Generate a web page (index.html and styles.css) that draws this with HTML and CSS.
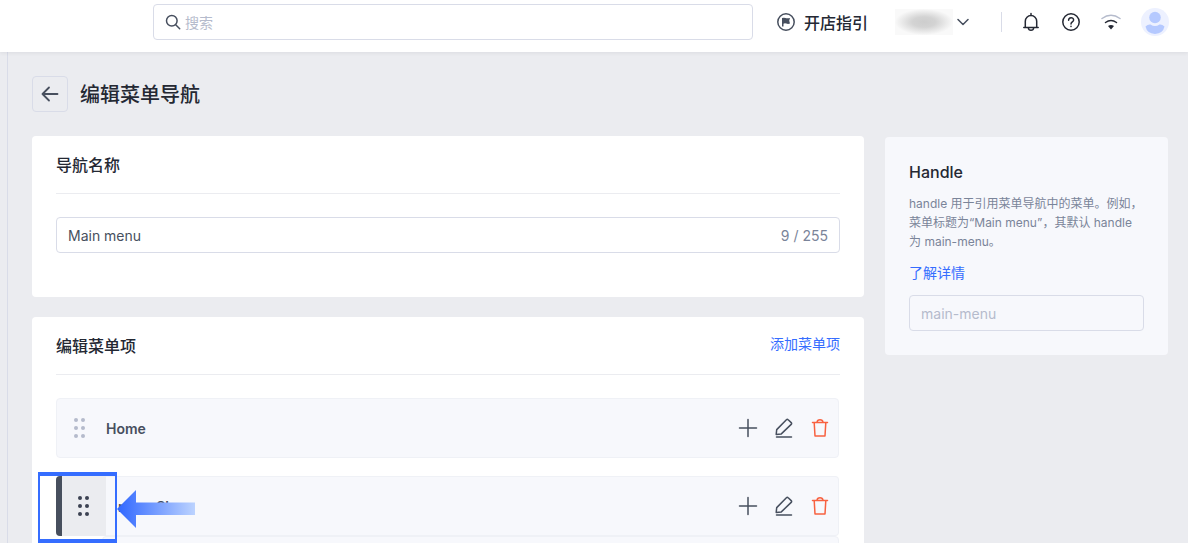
FILE: index.html
```html
<!DOCTYPE html>
<html lang="zh-CN">
<head>
    <meta charset="UTF-8">
    <meta name="viewport" content="width=device-width, initial-scale=1.0">
    <title>编辑菜单导航</title>
    <link rel="stylesheet" href="styles.css">
</head>
<body>
    <!-- shared icons -->
    <svg class="sprite" aria-hidden="true">
        <symbol id="icon-drag" viewBox="0 0 12 20">
            <circle cx="2" cy="2" r="2"/><circle cx="9" cy="2" r="2"/>
            <circle cx="2" cy="10" r="2"/><circle cx="9" cy="10" r="2"/>
            <circle cx="2" cy="18" r="2"/><circle cx="9" cy="18" r="2"/>
        </symbol>
        <symbol id="icon-plus" viewBox="0 0 20 20">
            <path d="M10 1.500v17M1.500 10h17"/>
        </symbol>
        <symbol id="icon-edit" viewBox="0 0 20 20">
            <path d="M2.200 16.400l.5-4.800L12.400 1.800q.9-.9 1.800 0l3 2.800q.9.900 0 1.800L7.300 15.900z"/>
            <path d="M2.500 19h15"/>
        </symbol>
        <symbol id="icon-trash" viewBox="0 0 20 20">
            <path d="M2.500 4.500h15M4.200 4.500l.8 13.500h10l.8-13.500M7 4.200c.4-3.300 5.600-3.300 6 0"/>
        </symbol>
    </svg>

    <div class="app">
        <header class="header">
            <label class="search">
                <svg class="search-icon" viewBox="0 0 16 16" aria-hidden="true">
                    <circle cx="6.800" cy="6.800" r="5.300"/>
                    <path d="M10.700 10.700l4 4"/>
                </svg>
                <input type="search" class="search-input" placeholder="搜索" aria-label="搜索">
            </label>
            <a href="#" class="guide">
                <svg class="guide-icon" viewBox="0 0 20 20" aria-hidden="true">
                    <circle cx="10" cy="10" r="8.200"/>
                    <path class="flag" d="M6 6q2-.6 3.500 0t4.500 0l-.8 2.700.8 2.800q-2 .8-3.700 0t-2.800.2V14.500H6z"/>
                </svg>
                开店指引
            </a>
            <button class="store" aria-label="切换店铺">
                <span class="store-name"></span>
                <svg class="chevron" viewBox="0 0 12 12" aria-hidden="true"><path d="M1 3.500l5 5 5-5"/></svg>
            </button>
            <div class="header-tools">
                <button class="tool" aria-label="通知">
                    <svg viewBox="0 0 20 20"><path d="M2.800 15.500h14.400M4.300 15.500V9.200a5.700 5.700 0 0 1 11.400 0v6.300M10 1.500v2M7.300 16c.4 3 5 3 5.400 0"/></svg>
                </button>
                <button class="tool" aria-label="帮助">
                    <svg viewBox="0 0 20 20"><circle cx="10" cy="10" r="8.200"/><path d="M7.600 8.300c0-3.500 5-3.500 5-.3 0 2-2.600 1.900-2.600 4M10 14.200v.3"/></svg>
                </button>
                <button class="tool" aria-label="网络">
                    <svg viewBox="0 0 20 20"><path class="faint" d="M1 6.500q9-6.500 18 0"/><path d="M4.500 10.500q5.500-4 11 0"/><path class="dot" d="M7 14q3-2.200 6 0L10 17.500z"/></svg>
                </button>
                <button class="avatar" aria-label="账户">
                    <svg viewBox="0 0 28 28"><circle cx="14" cy="14" r="14" fill="#edf1ff"/><circle cx="14" cy="9.500" r="5.800" fill="#b5c9ff"/><path d="M4.500 18.500Q7 16 9.500 16.500 14 19.500 18.500 16.500 21 16 23.500 18.500 22 25.500 14 26 6 25.500 4.500 18.500z" fill="#b5c9ff"/></svg>
                </button>
            </div>
        </header>

        <main class="page">
            <div class="page-title">
                <button class="back" aria-label="返回">
                    <svg viewBox="0 0 20 20"><path d="M17.500 10H2.500M9 3.500L2.500 10 9 16.500"/></svg>
                </button>
                <h1>编辑菜单导航</h1>
            </div>

            <div class="columns">
                <div class="content">
                    <section class="card">
                        <div class="card-head">
                            <h2><label for="nav-name">导航名称</label></h2>
                        </div>
                        <div class="field">
                            <input type="text" id="nav-name" value="Main menu" maxlength="255">
                            <span class="count">9 / 255</span>
                        </div>
                    </section>

                    <section class="card">
                        <div class="card-head">
                            <h2>编辑菜单项</h2>
                            <a href="#" class="link">添加菜单项</a>
                        </div>
                        <div class="item">
                            <button class="drag" aria-label="拖动"><svg><use href="#icon-drag"/></svg></button>
                            <span class="item-name">Home</span>
                            <div class="actions">
                                <button aria-label="添加"><svg><use href="#icon-plus"/></svg></button>
                                <button aria-label="编辑"><svg><use href="#icon-edit"/></svg></button>
                                <button class="delete" aria-label="删除"><svg><use href="#icon-trash"/></svg></button>
                            </div>
                        </div>
                        <div class="item active">
                            <button class="drag" aria-label="拖动"><svg><use href="#icon-drag"/></svg></button>
                            <span class="item-name">more Sh</span>
                            <div class="actions">
                                <button aria-label="添加"><svg><use href="#icon-plus"/></svg></button>
                                <button aria-label="编辑"><svg><use href="#icon-edit"/></svg></button>
                                <button class="delete" aria-label="删除"><svg><use href="#icon-trash"/></svg></button>
                            </div>
                            <div class="highlight"></div>
                            <svg class="pointer" viewBox="0 0 78 38" aria-hidden="true">
                                <defs>
                                    <linearGradient id="pointer-fill">
                                        <stop offset="0" stop-color="#2f66ff"/>
                                        <stop offset="1" stop-color="#bcd3ff"/>
                                    </linearGradient>
                                </defs>
                                <path d="M0 19L19 0v12.500h59v12.500H19v13z" fill="url(#pointer-fill)"/>
                            </svg>
                        </div>
                        <div class="item child"></div>
                    </section>
                </div>

                <aside class="side">
                    <h2>Handle</h2>
                    <p>handle 用于引用菜单导航中的菜单。例如，菜单标题为“Main menu”，其默认 handle 为 main-menu。</p>
                    <a href="#" class="link">了解详情</a>
                    <input type="text" class="handle" placeholder="main-menu" aria-label="Handle" disabled>
                </aside>
            </div>
        </main>
    </div>
</body>
</html>
```
FILE: styles.css
```css
* {
    margin: 0;
    padding: 0;
    box-sizing: border-box;
}

body, button, input {
    font-family: Inter, "Noto Sans CJK SC", sans-serif;
    font-size: 14px;
    color: #474f5e;
}

button {
    background: none;
    border: none;
    cursor: pointer;
}

a {
    text-decoration: none;
}

svg {
    display: block;
    fill: none;
    stroke: currentColor;
    stroke-width: 1.5;
    stroke-linecap: round;
    stroke-linejoin: round;
}

h1, h2 {
    color: #242833;
    font-weight: 500;
}

h1 {
    padding-top: 2px;
    font-size: 20px;
    line-height: 28px;
}

h2 {
    font-size: 16px;
    line-height: 24px;
}

.sprite {
    display: none;
}

.app {
    display: flex;
    flex-direction: column;
    height: 100vh;
    overflow: hidden;
    background: #ebecf0;
}

/* header */
.header {
    display: flex;
    flex-shrink: 0;
    align-items: center;
    height: 52px;
    padding: 0 19px 8px 153px;
    background: #fff;
    box-shadow: 0 1px 4px rgba(36, 40, 51, 0.08);
    z-index: 1;
}

.search {
    display: flex;
    flex: 1;
    align-items: center;
    gap: 4px;
    height: 36px;
    padding: 0 11px;
    border: 1px solid #d9dce8;
    border-radius: 4px;
}

.search-icon {
    width: 16px;
    height: 16px;
}

.search-input {
    flex: 1;
    border: none;
    outline: none;
    background: none;
}

.search-input::placeholder,
.handle::placeholder {
    color: #b5bbcc;
}

.guide {
    display: flex;
    align-items: center;
    gap: 8px;
    margin-left: 23px;
    color: #242833;
    font-size: 16px;
    font-weight: 500;
}

.guide-icon {
    width: 20px;
    height: 20px;
    color: #474f5e;
}

.flag {
    fill: currentColor;
    stroke: none;
}

.store {
    display: flex;
    align-items: center;
    gap: 4px;
    margin-left: 27px;
}

.store-name {
    width: 58px;
    height: 26px;
    background: radial-gradient(closest-side, #cdcdcd, #d3d3d3 40%, #e6e6e6 70%, #f9f9f9);
}

.chevron {
    width: 12px;
    height: 12px;
}

.header-tools {
    display: flex;
    align-items: center;
    gap: 20px;
    margin-left: 32px;
    padding-left: 20px;
    background: linear-gradient(#d9dce8, #d9dce8) left center / 1px 20px no-repeat;
}

.tool {
    color: #242833;
}

.tool svg {
    width: 20px;
    height: 20px;
}

.tool .faint {
    stroke: #b5bbcc;
}

.tool .dot {
    fill: currentColor;
    stroke: none;
}

.avatar svg {
    width: 28px;
    height: 28px;
    stroke: none;
}

/* page */
.page {
    flex: 1;
    margin-left: 7px;
    padding: 24px 20px 0 24px;
    border-left: 1px solid #d9dce8;
}

.page-title {
    display: flex;
    align-items: center;
    gap: 12px;
    margin-bottom: 24px;
}

.back {
    padding: 7px;
    border: 1px solid #d9dce8;
    border-radius: 4px;
}

.back svg {
    width: 20px;
    height: 20px;
    stroke-width: 1.8;
}

.columns {
    display: flex;
    align-items: flex-start;
    gap: 21px;
}

.content {
    display: flex;
    flex: 1;
    flex-direction: column;
    gap: 20px;
}

.card {
    padding: 17px 24px 44px;
    border-radius: 4px;
    background: #fff;
}

.card-head {
    display: flex;
    justify-content: space-between;
    margin-bottom: 23px;
    padding-bottom: 16px;
    border-bottom: 1px solid #ebecf0;
}

.link {
    color: #356dff;
    line-height: 20px;
}

.field {
    display: flex;
    align-items: center;
    height: 36px;
    padding: 0 11px;
    border: 1px solid #d9dce8;
    border-radius: 4px;
}

.field input {
    flex: 1;
    border: none;
    outline: none;
}

.count {
    color: #7a8499;
}

.item {
    display: flex;
    position: relative;
    align-items: center;
    height: 60px;
    margin: 0 1px 18px 0;
    padding: 0 8px 0 17px;
    border: 1px solid #eff1f6;
    border-radius: 4px;
    background: #f7f8fc;
}

.drag {
    color: #b5bbcc;
}

.drag svg {
    width: 12px;
    height: 20px;
    fill: currentColor;
    stroke: none;
}

.item-name {
    flex: 1;
    margin-left: 20px;
    font-weight: 600;
}

.actions {
    display: flex;
    gap: 16px;
}

.actions svg {
    width: 20px;
    height: 20px;
}

.delete {
    color: #f86140;
}

.item.active {
    z-index: 1;
    margin-bottom: 0;
    padding-left: 0;
    border-left: none;
}

.active .drag {
    display: flex;
    align-items: center;
    height: 60px;
    padding: 0 16px;
    border-left: 6px solid #474f5e;
    border-radius: 4px 0 0 4px;
    background: #ebecf0;
    color: #3b4252;
}

.active .item-name {
    margin-left: 12px;
}

.item.child {
    margin-left: 46px;
}

/* callout over the drag handle */
.highlight {
    position: absolute;
    top: -5px;
    left: -18px;
    width: 79px;
    height: 71px;
    border: solid #356dff;
    border-width: 4px 2px;
}

.pointer {
    position: absolute;
    top: 13px;
    left: 61px;
    width: 78px;
    height: 38px;
    stroke: none;
}

/* side */
.side {
    width: 283px;
    margin-top: 1px;
    padding: 23px 24px 24px;
    border-radius: 4px;
    background: #f7f8fc;
}

.side p {
    margin: 10px 0 12px;
    color: #7a8499;
    font-size: 12px;
    line-height: 19px;
}

.handle {
    width: 100%;
    height: 36px;
    margin-top: 12px;
    padding: 0 11px;
    border: 1px solid #d9dce8;
    border-radius: 4px;
    background: none;
}
```
